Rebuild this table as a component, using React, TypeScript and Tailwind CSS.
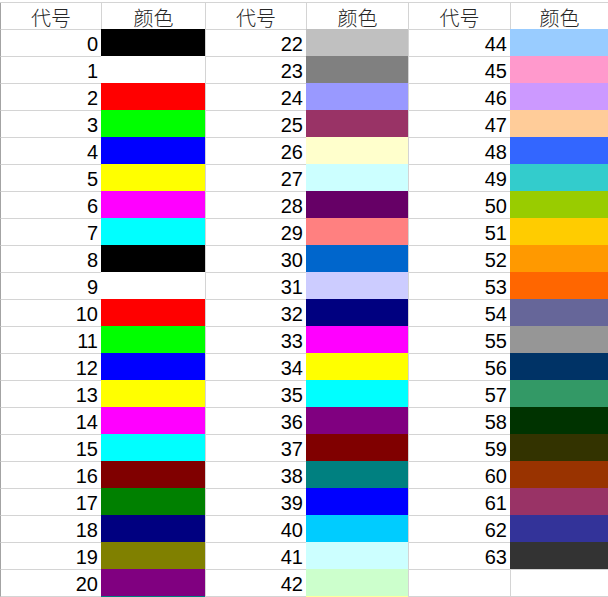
const palette = [
  "#000000", "#FFFFFF", "#FF0000", "#00FF00", "#0000FF", "#FFFF00", "#FF00FF", "#00FFFF",
  "#000000", "#FFFFFF", "#FF0000", "#00FF00", "#0000FF", "#FFFF00", "#FF00FF", "#00FFFF",
  "#800000", "#008000", "#000080", "#808000", "#800080", "#008080", "#C0C0C0", "#808080",
  "#9999FF", "#993366", "#FFFFCC", "#CCFFFF", "#660066", "#FF8080", "#0066CC", "#CCCCFF",
  "#000080", "#FF00FF", "#FFFF00", "#00FFFF", "#800080", "#800000", "#008080", "#0000FF",
  "#00CCFF", "#CCFFFF", "#CCFFCC", "#FFFF99", "#99CCFF", "#FF99CC", "#CC99FF", "#FFCC99",
  "#3366FF", "#33CCCC", "#99CC00", "#FFCC00", "#FF9900", "#FF6600", "#666699", "#969696",
  "#003366", "#339966", "#003300", "#333300", "#993300", "#993366", "#333399", "#333333",
];

const ROWS = 22;

// three blocks of 代号/颜色, each 22 rows tall (last row only peeks in at the bottom edge)
const groups = [0, 22, 44];

const codeClass = [
  "w-[101px] border-l border-l-[#a3a3a3]",
  "w-[101px] border-l border-l-[#d4d4d4]",
  "w-[102px] border-l border-l-[#d4d4d4]",
];
const colorClass = ["w-[104px]", "w-[102px]", "w-[98px]"];

const headCell =
  "h-full flex items-center justify-center pt-[3px] border-l border-[#d4d4d4] text-[20px] font-light text-[#262626]";

const App = () => {
  return (
    <div
      className="w-[608px] h-[597px] overflow-hidden bg-white pt-[2px]"
      style={{ fontFamily: '"Liberation Sans", Arial, "Noto Sans CJK SC", sans-serif' }}
    >
      {/* header row */}
      <div
        className="flex h-[27px] border-t border-[#d4d4d4]"
        style={{ fontFamily: '"Noto Sans CJK SC", "Noto Sans", sans-serif' }}
      >
        {groups.map((g, i) => (
          <div key={g} className="flex h-full">
            <div className={`${headCell} ${i === 0 ? "w-[101px] border-l-[#a3a3a3]" : i === 1 ? "w-[101px]" : "w-[102px]"}`}>
              代号
            </div>
            <div className={`${headCell} ${colorClass[i]}`}>颜色</div>
          </div>
        ))}
      </div>

      {/* body rows */}
      {Array.from({ length: ROWS }).map((_, r) => (
        <div key={r} className="flex h-[27px]">
          {groups.map((g, i) => {
            const n = g + r;
            const has = n < 64;
            const selected = i === 0 && r === 11;
            const showText = has && r < ROWS - 1;
            return (
              <div key={g} className="flex h-full">
                <div
                  className={`h-full flex items-center justify-end pr-[3px] pt-[1px] border-t border-t-[#d4d4d4] text-[20px] text-black ${codeClass[i]} ${selected ? "border-l-[#21a366]" : ""}`}
                >
                  {showText ? n : ""}
                </div>
                {has ? (
                  <div
                    className={`h-full ${colorClass[i]}`}
                    style={{ backgroundColor: palette[n] }}
                  />
                ) : (
                  <div className={`h-full border-l border-t border-[#d4d4d4] ${colorClass[i]}`} />
                )}
              </div>
            );
          })}
        </div>
      ))}
    </div>
  );
};

export default App;
